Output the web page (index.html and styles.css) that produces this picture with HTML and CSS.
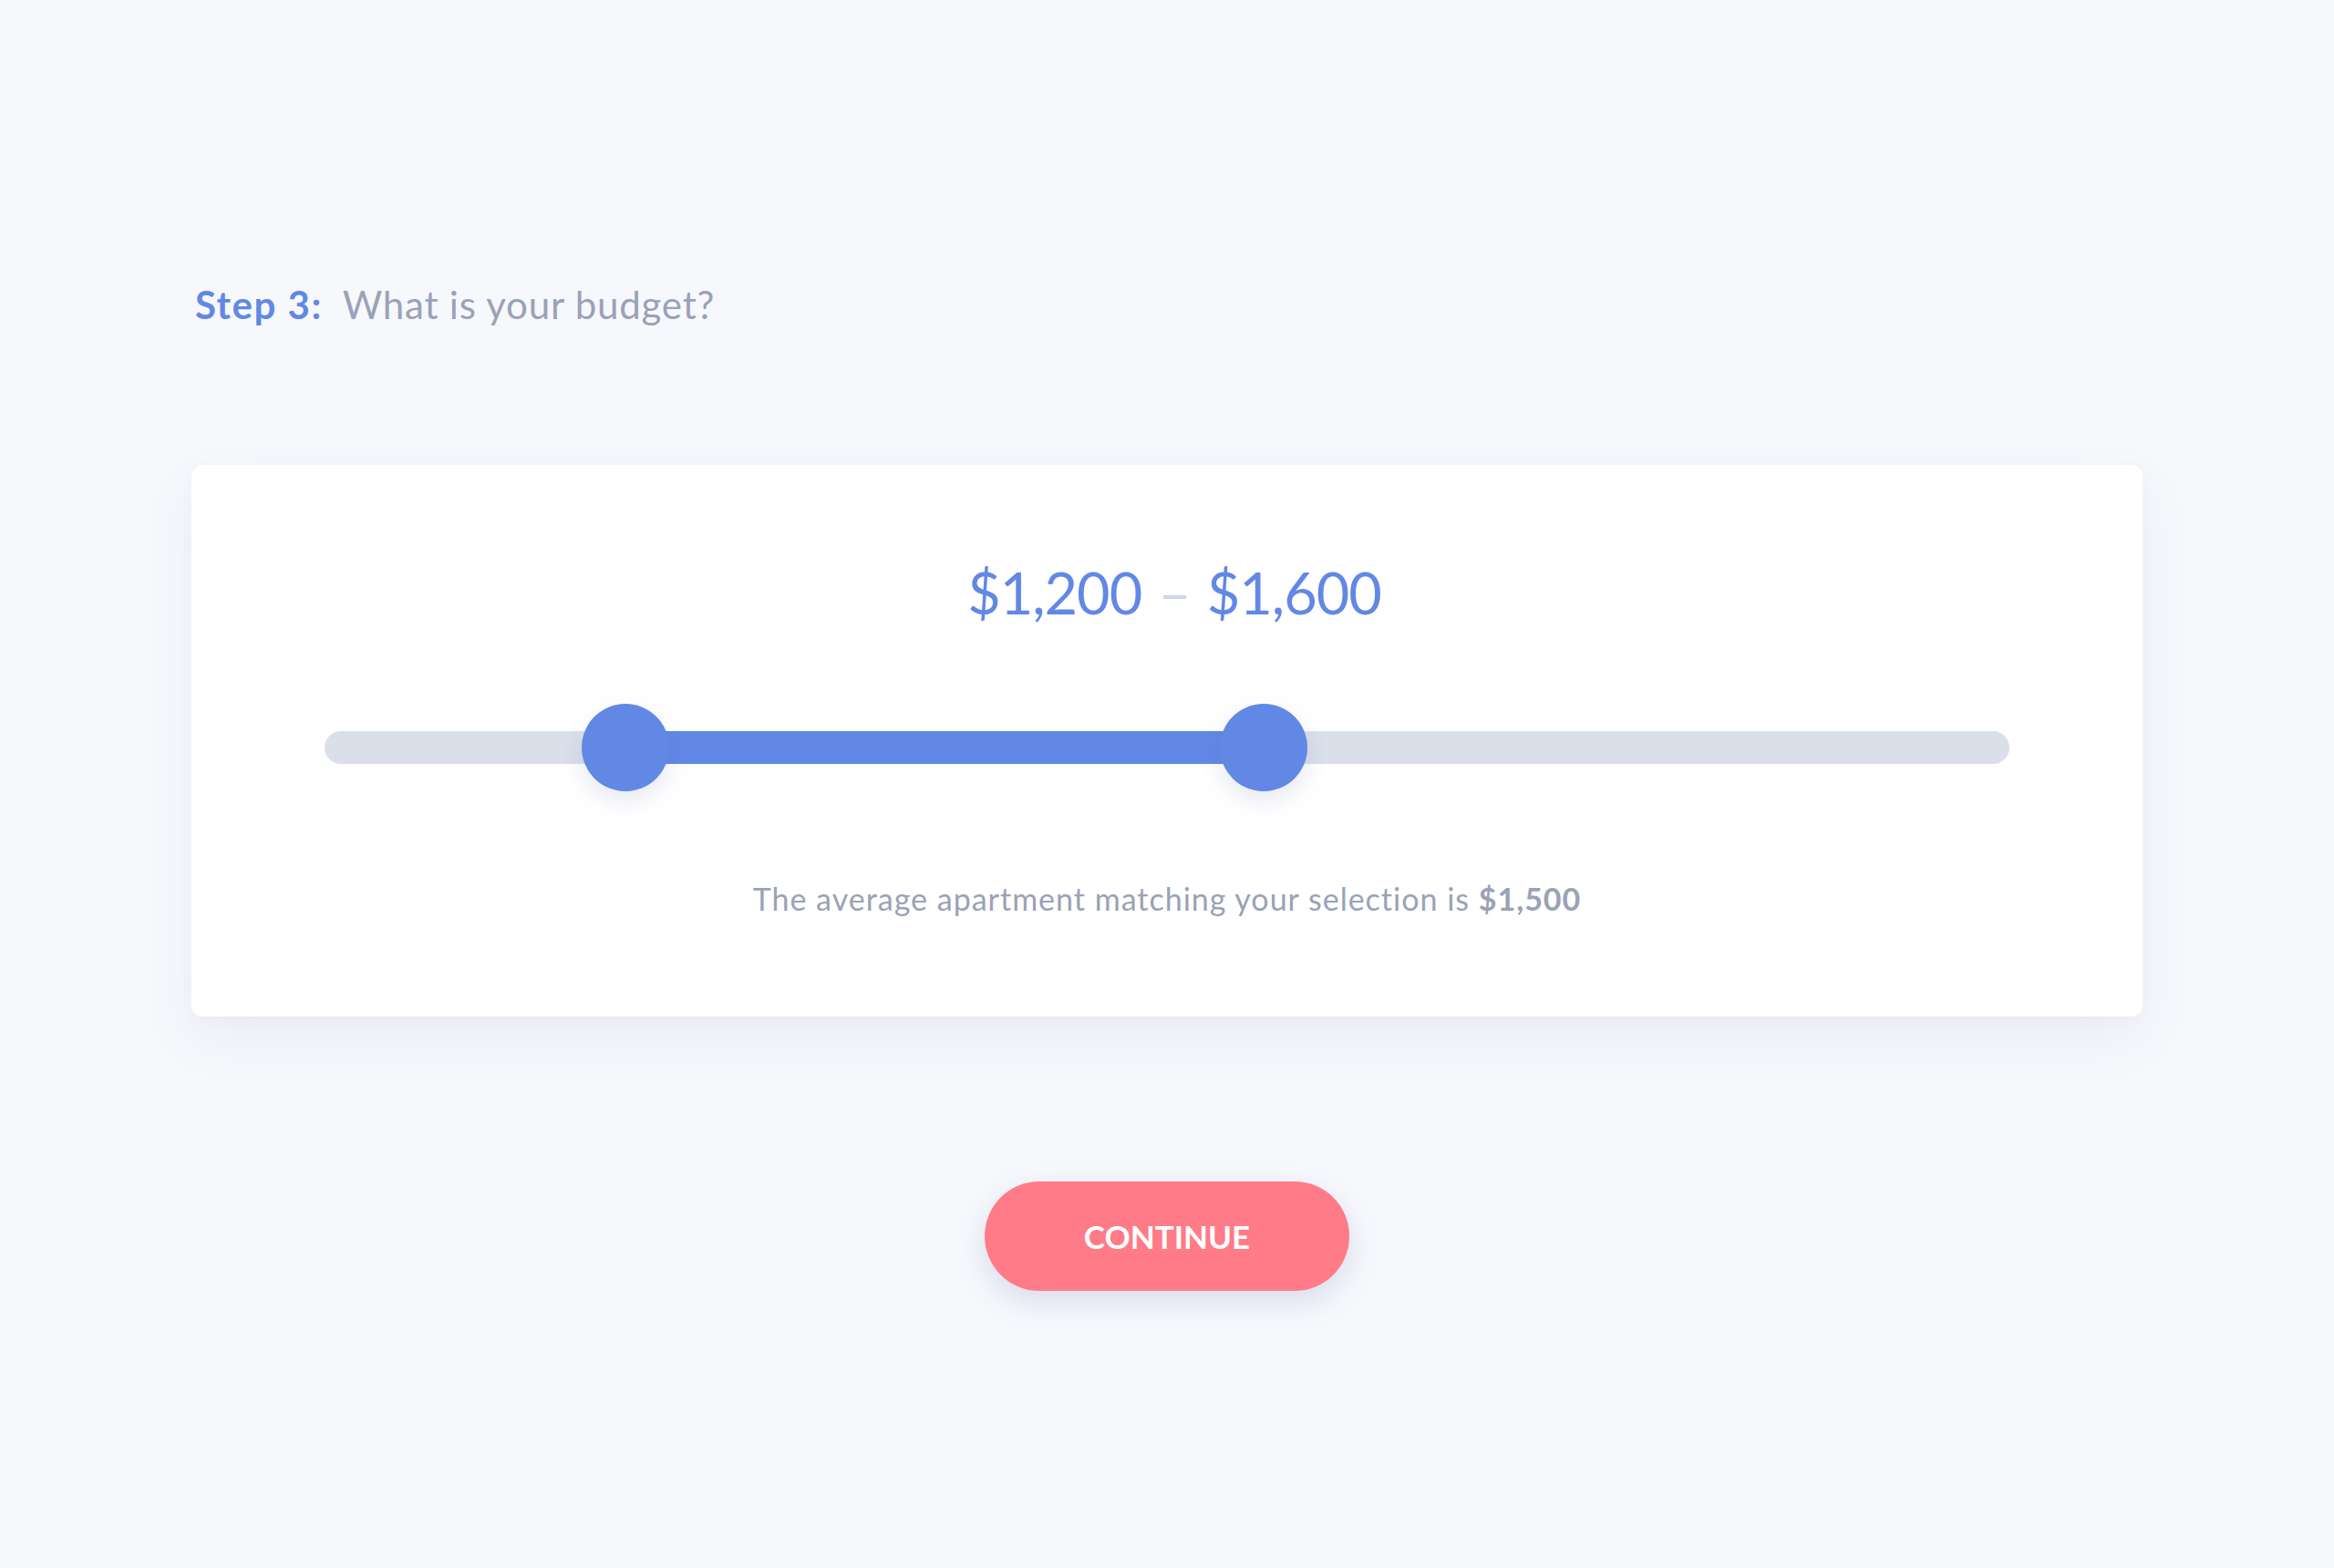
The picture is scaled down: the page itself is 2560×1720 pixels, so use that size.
FILE: index.html
```html
<!DOCTYPE html>
<html lang="en">
<head>
<meta charset="utf-8">
<title>Step 3: What is your budget?</title>
<link rel="stylesheet" href="styles.css">
</head>
<body>
<main class="page">
  <h1 class="step-title"><span class="step-label">Step 3:</span><span class="step-question">What is your budget?</span></h1>
  <section class="card">
    <div class="price-range"><span>$1,200</span><span class="dash">–</span><span>$1,600</span></div>
    <div class="slider">
      <div class="track">
        <div class="fill" style="left: 17.86%; width: 37.88%;"></div>
        <div class="thumb" style="left: 17.86%;"></div>
        <div class="thumb" style="left: 55.74%;"></div>
      </div>
    </div>
    <p class="average">The average apartment matching your selection is <strong>$1,500</strong></p>
  </section>
  <div class="actions">
    <button class="continue" type="button">CONTINUE</button>
  </div>
</main>
</body>
</html>
```
FILE: styles.css
```css
* { box-sizing: border-box; }
html, body { margin: 0; padding: 0; }
body {
  background: #f7f8fc;
  font-family: Lato, "Open Sans", "Liberation Sans", sans-serif;
  width: 2560px;
  height: 1720px;
  overflow: hidden;
}
.page {
  padding: 309px 210px 0 210px;
  display: flex;
  flex-direction: column;
}
.step-title {
  margin: 0 0 0 4px;
  font-size: 42px;
  line-height: 50px;
  font-weight: 400;
  display: flex;
  gap: 22px;
}
.step-label { color: #6288e5; font-weight: 700; letter-spacing: 1.5px; }
.step-question { color: #9aa2b8; letter-spacing: 0.8px; }
.card {
  margin-top: 151px;
  height: 605px;
  background: #ffffff;
  border-radius: 12px;
  box-shadow: 0 24px 60px rgba(90, 105, 160, 0.07), 0 4px 14px rgba(90, 105, 160, 0.03);
  padding: 102px 146px 0 146px;
  display: flex;
  flex-direction: column;
  align-items: stretch;
}
.price-range {
  display: flex;
  justify-content: center;
  gap: 18px;
  font-size: 63px;
  line-height: 76px;
  letter-spacing: -1px;
  color: #6288e5;
  padding-left: 16px;
}
.price-range .dash { color: #d0d6e8; }
.slider {
  margin-top: 114px;
}
.track {
  position: relative;
  height: 36px;
  border-radius: 18px;
  background: #dadfea;
}
.fill {
  position: absolute;
  top: 0;
  height: 36px;
  background: #6288e5;
}
.thumb {
  position: absolute;
  top: 50%;
  width: 96px;
  height: 96px;
  margin: -48px 0 0 -48px;
  border-radius: 50%;
  background: #6288e5;
  box-shadow: 0 10px 24px rgba(70, 90, 160, 0.14);
}
.average {
  margin: 128px 0 0 0;
  text-align: center;
  font-size: 34px;
  line-height: 40px;
  letter-spacing: 1px;
  color: #9aa2b6;
}
.average strong { font-weight: 700; }
.actions {
  margin-top: 181px;
  display: flex;
  justify-content: center;
}
.continue {
  width: 400px;
  height: 120px;
  border: none;
  border-radius: 60px;
  background: #ff7b88;
  color: #ffffff;
  font-family: Lato, "Open Sans", "Liberation Sans", sans-serif;
  font-size: 35px;
  font-weight: 700;
  letter-spacing: 0;
  box-shadow: 0 12px 32px rgba(110, 125, 180, 0.22);
  padding: 0;
}
```
